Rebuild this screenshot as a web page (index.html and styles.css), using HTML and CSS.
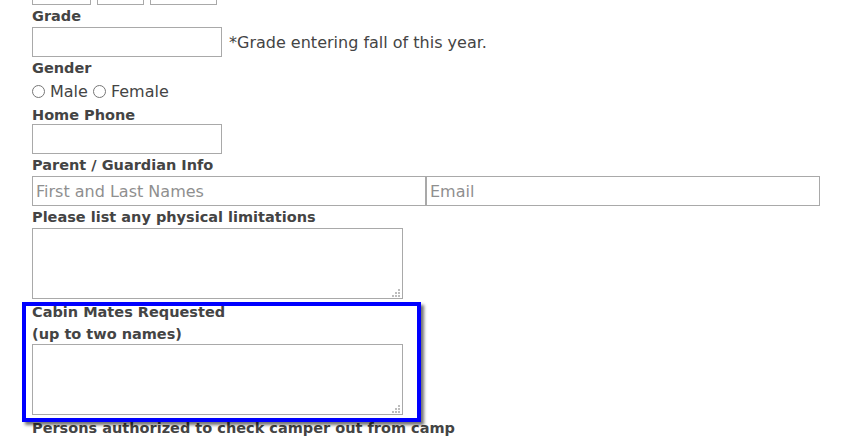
FILE: index.html
```html
<!DOCTYPE html>
<html>

<head>
    <title>Camper Registration</title>
    <link rel="stylesheet" href="styles.css">
</head>

<body>
    <form class="camper-form">
        <div class="date-row">
            <input type="text" class="date-month">
            <input type="text" class="date-day">
            <input type="text" class="date-year">
        </div>

        <label class="field-label" for="grade">Grade</label>
        <div class="grade-row">
            <input type="text" id="grade" class="short-input">
            <span class="note">*Grade entering fall of this year.</span>
        </div>

        <label class="field-label">Gender</label>
        <div class="radio-row">
            <label class="option"><input type="radio" name="gender"> Male</label>
            <label class="option"><input type="radio" name="gender"> Female</label>
        </div>

        <label class="field-label spaced" for="phone">Home Phone</label>
        <input type="text" id="phone" class="short-input phone-input">

        <label class="field-label">Parent / Guardian Info</label>
        <div class="pair-row">
            <input type="text" class="wide-input" placeholder="First and Last Names">
            <input type="text" class="wide-input" placeholder="Email">
        </div>

        <label class="field-label" for="limits">Please list any physical limitations</label>
        <div class="area-wrap">
            <textarea id="limits"></textarea>
            <svg class="grip" width="8" height="8" viewBox="0 0 8 8">
                <rect x="6" y="0" width="2" height="2" />
                <rect x="3" y="3" width="2" height="2" />
                <rect x="6" y="3" width="2" height="2" />
                <rect x="0" y="6" width="2" height="2" />
                <rect x="3" y="6" width="2" height="2" />
                <rect x="6" y="6" width="2" height="2" />
            </svg>
        </div>

        <!-- highlighted section -->
        <div class="highlight">
            <label class="field-label cabin-label" for="cabin">Cabin Mates Requested</label>
            <label class="field-label sub-label" for="cabin">(up to two names)</label>
            <div class="area-wrap cabin-area">
                <textarea id="cabin"></textarea>
                <svg class="grip" width="8" height="8" viewBox="0 0 8 8">
                    <rect x="6" y="0" width="2" height="2" />
                    <rect x="3" y="3" width="2" height="2" />
                    <rect x="6" y="3" width="2" height="2" />
                    <rect x="0" y="6" width="2" height="2" />
                    <rect x="3" y="6" width="2" height="2" />
                    <rect x="6" y="6" width="2" height="2" />
                </svg>
            </div>
        </div>

        <label class="field-label persons-label">Persons authorized to check camper out from camp</label>
    </form>
</body>

</html>
```

FILE: styles.css
```css
body {
    font-family: "DejaVu Sans", Verdana, sans-serif;
    font-size: 16px;
    color: #444;
    margin: 0;
    padding: 0;
    background-color: #fff;
    overflow: hidden;
}

.camper-form {
    margin-top: -25px;
    padding-left: 32px;
}

input[type="text"],
textarea {
    box-sizing: border-box;
    border: 1px solid #a9a9a9;
    border-radius: 0;
    margin: 0;
    padding: 0 3px;
    font-family: "DejaVu Sans", Verdana, sans-serif;
    font-size: 16px;
    color: #444;
    background-color: #fff;
}

input[type="text"] {
    height: 30px;
}

input::placeholder {
    color: #8f8f8f;
}

.field-label {
    display: block;
    font-size: 14.5px;
    font-weight: bold;
    line-height: 18px;
    margin-top: 2px;
}

/* Birth date row */
.date-row {
    display: flex;
    gap: 6px;
    height: 30px;
}

.date-month {
    width: 59px;
}

.date-day {
    width: 47px;
}

.date-year {
    width: 67px;
}

/* Grade */
.grade-row {
    display: flex;
    align-items: center;
    margin-top: 2px;
}

.short-input {
    width: 190px;
}

.note {
    margin-left: 7px;
}

/* Gender */
.radio-row {
    display: flex;
    align-items: center;
    height: 24px;
    margin-top: 2px;
}

.option {
    display: flex;
    align-items: center;
    margin-right: 5px;
}

.option input[type="radio"] {
    width: 13px;
    height: 13px;
    margin: 0 5px 0 0;
}

.spaced {
    margin-top: 3px;
}

.phone-input {
    display: block;
    margin-top: 5px;
}

/* Parent / guardian */
.pair-row {
    display: flex;
    margin-top: 2px;
}

.wide-input {
    width: 394px;
}

/* Textareas */
.area-wrap {
    position: relative;
    width: 371px;
    height: 71px;
    margin-top: 2px;
}

.area-wrap textarea {
    display: block;
    width: 371px;
    height: 71px;
    resize: none;
}

.grip {
    position: absolute;
    right: 3px;
    bottom: 2px;
    fill: #bdbdbd;
}

/* Highlight box */
.highlight {
    position: relative;
    margin-top: 4px;
}

.highlight::after {
    content: "";
    position: absolute;
    left: -10px;
    top: -1px;
    width: 391px;
    height: 112px;
    border: 4px solid #0000ff;
    box-shadow: 3px 3px 3px rgba(0, 0, 0, 0.55);
    z-index: 2;
    pointer-events: none;
}

.cabin-label {
    margin-top: 0;
}

.sub-label {
    margin-top: 4px;
}

.cabin-area {
    margin-top: 1px;
}

.persons-label {
    margin-top: 4px;
}
```
